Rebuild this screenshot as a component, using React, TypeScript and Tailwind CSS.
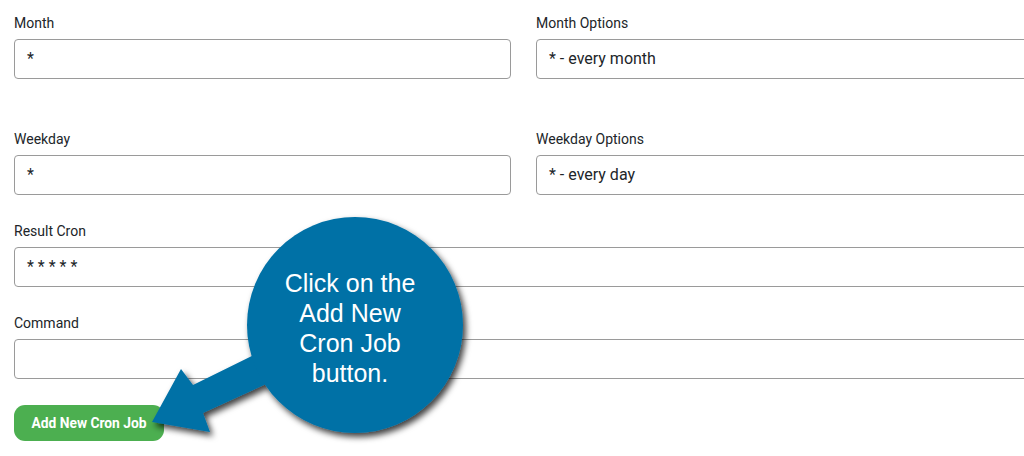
import React from "react";

const labelCls = "block text-[14px] leading-[22px] text-[#212529]";
const inputCls =
  "h-[40px] w-full rounded-[4px] border border-[#9a9a9a] bg-white px-[12px] flex items-center text-[16px] text-[#212529]";

function Field({ label, value, className = "" }: { label: string; value: string; className?: string }) {
  return (
    <div className={className}>
      <label className={labelCls}>{label}</label>
      <div className={"mt-[5px] " + inputCls}>{value}</div>
    </div>
  );
}

export default function App() {
  return (
    <div
      className="relative h-[456px] w-[1024px] overflow-hidden bg-white"
      style={{ fontFamily: "Roboto, 'Liberation Sans', Arial, sans-serif" }}
    >
      <div className="w-[1047px] pl-[14px] pt-[12px]">
        <div className="grid grid-cols-[497px_497px] gap-x-[25px]">
          <Field label="Month" value="*" />
          <Field label="Month Options" value="* - every month" />
        </div>
        <div className="mt-[49px] grid grid-cols-[497px_497px] gap-x-[25px]">
          <Field label="Weekday" value="*" />
          <Field label="Weekday Options" value="* - every day" />
        </div>
        <Field className="mt-[25px] w-[1019px]" label="Result Cron" value="* * * * *" />
        <Field className="mt-[25px] w-[1019px]" label="Command" value="" />
        <button className="mt-[26px] h-[36px] w-[150px] rounded-[11px] bg-[#4caf50] text-[13.8px] font-bold text-white">
          Add New Cron Job
        </button>
      </div>

      <svg
        className="pointer-events-none absolute left-0 top-0"
        width="1024"
        height="456"
        viewBox="0 0 1024 456"
      >
        <defs>
          <filter id="sh" x="-20%" y="-20%" width="150%" height="150%">
            <feDropShadow dx="3" dy="4" stdDeviation="3" floodColor="#000" floodOpacity="0.75" />
          </filter>
        </defs>
        <g filter="url(#sh)">
          <polygon
            points="152,422 181,369 193,385 262,351 275,380 203,413 210,432"
            fill="#0571a6"
          />
          <circle cx="355" cy="325" r="108" fill="#0571a6" />
        </g>
      </svg>
      <div
        className="pointer-events-none absolute left-[242px] top-[268px] w-[216px] text-center text-[25px] leading-[30px] text-white"
        style={{ fontFamily: "'Liberation Sans', Arial, sans-serif" }}
      >
        Click on the
        <br />
        Add New
        <br />
        Cron Job
        <br />
        button.
      </div>
    </div>
  );
}
